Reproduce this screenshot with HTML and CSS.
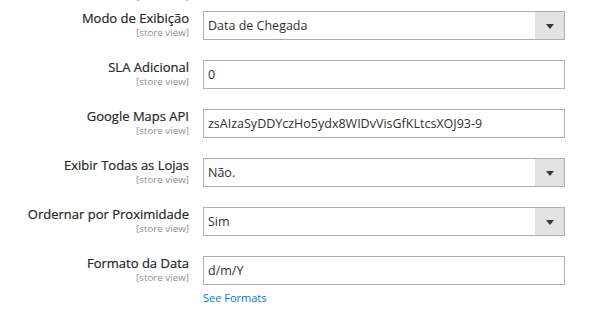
FILE: index.html
```html
<!DOCTYPE html>
<html lang="pt">
<head>
<meta charset="utf-8">
<title>Configuração</title>
<link rel="stylesheet" href="styles.css">
</head>
<body>
<div class="form">
  <div class="prev-scope"><span class="scope">[store view]</span></div>

  <div class="row">
    <div class="label"><span class="title">Modo de Exibição</span><span class="scope">[store view]</span></div>
    <div class="control">
      <div class="field select"><span class="value">Data de Chegada</span><span class="btn"><span class="arrow"></span></span></div>
    </div>
  </div>

  <div class="row">
    <div class="label"><span class="title">SLA Adicional</span><span class="scope">[store view]</span></div>
    <div class="control">
      <div class="field"><span class="value">0</span></div>
    </div>
  </div>

  <div class="row">
    <div class="label"><span class="title">Google Maps API</span><span class="scope">[store view]</span></div>
    <div class="control">
      <div class="field"><span class="value">zsAIzaSyDDYczHo5ydx8WIDvVisGfKLtcsXOJ93-9</span></div>
    </div>
  </div>

  <div class="row">
    <div class="label"><span class="title">Exibir Todas as Lojas</span><span class="scope">[store view]</span></div>
    <div class="control">
      <div class="field select"><span class="value">Não.</span><span class="btn"><span class="arrow"></span></span></div>
    </div>
  </div>

  <div class="row">
    <div class="label"><span class="title">Ordernar por Proximidade</span><span class="scope">[store view]</span></div>
    <div class="control">
      <div class="field select"><span class="value">Sim</span><span class="btn"><span class="arrow"></span></span></div>
    </div>
  </div>

  <div class="row">
    <div class="label"><span class="title">Formato da Data</span><span class="scope">[store view]</span></div>
    <div class="control">
      <div class="field"><span class="value">d/m/Y</span></div>
      <a class="note" href="#">See Formats</a>
    </div>
  </div>
</div>
</body>
</html>
```
FILE: styles.css
```css
html, body {
  margin: 0;
  padding: 0;
  background: #ffffff;
}

body {
  font-family: "Open Sans", "Liberation Sans", sans-serif;
  color: #303030;
}

.form {
  display: flex;
  flex-direction: column;
  width: 596px;
}

.prev-scope {
  width: 189px;
  height: 2px;
  overflow: hidden;
  display: flex;
  justify-content: flex-end;
  align-items: flex-end;
}

.prev-scope .scope {
  flex: none;
}

.row {
  display: grid;
  grid-template-columns: 189px 362px;
  column-gap: 14px;
  margin-top: 9px;
  margin-bottom: 11px;
}

.label {
  display: flex;
  flex-direction: column;
  align-items: flex-end;
  text-align: right;
}

.title {
  margin-top: -1px;
  font-size: 13px;
  font-weight: 400;
  line-height: 17px;
  color: #262626;
  -webkit-text-stroke: 0.2px #262626;
}

.scope {
  font-size: 9.8px;
  line-height: 11px;
  color: #8f8f8f;
  font-weight: 400;
}

.control {
  display: flex;
  flex-direction: column;
  align-items: flex-start;
}

.field {
  box-sizing: border-box;
  width: 362px;
  height: 29px;
  border: 1px solid #adadad;
  background: #ffffff;
  display: flex;
  align-items: center;
  padding-left: 4px;
}

.value {
  flex: 1;
  font-size: 12.5px;
  line-height: 27px;
  color: #303030;
  white-space: nowrap;
}

.btn {
  flex: none;
  width: 29px;
  align-self: stretch;
  background: #e3e3e3;
  display: flex;
  align-items: center;
  justify-content: center;
}

.arrow {
  width: 0;
  height: 0;
  border-left: 4px solid transparent;
  border-right: 4px solid transparent;
  border-top: 5px solid #41362f;
  margin-top: 1px;
}

.note {
  margin-top: 6px;
  font-size: 11px;
  line-height: 14px;
  color: #007bdb;
  text-decoration: none;
}
```
